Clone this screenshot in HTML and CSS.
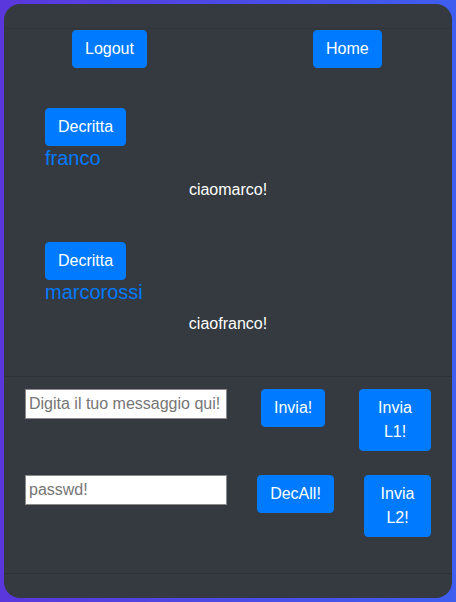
FILE: index.html
```html
<!DOCTYPE html>
<html lang="it">
<head>
<meta charset="utf-8">
<title>Chat</title>
<link rel="stylesheet" href="styles.css">
</head>
<body>
<div class="card">
  <div class="card-header"></div>
  <div class="card-body">
    <div class="nav-row">
      <button class="btn">Logout</button>
      <button class="btn btn-home">Home</button>
    </div>
    <div class="messages">
      <div class="msg">
        <button class="btn">Decritta</button>
        <div class="msg-name">franco</div>
        <p class="msg-text">ciaomarco!</p>
      </div>
      <div class="msg">
        <button class="btn">Decritta</button>
        <div class="msg-name">marcorossi</div>
        <p class="msg-text">ciaofranco!</p>
      </div>
    </div>
  </div>
  <div class="compose">
    <div class="compose-row">
      <input class="field" type="text" placeholder="Digita il tuo messaggio qui!">
      <button class="btn btn-send">Invia!</button>
      <button class="btn btn-l1">Invia L1!</button>
    </div>
    <div class="compose-row">
      <input class="field" type="text" placeholder="passwd!">
      <button class="btn btn-dec">DecAll!</button>
      <button class="btn btn-l2">Invia L2!</button>
    </div>
  </div>
  <div class="card-footer"></div>
</div>
</body>
</html>
```

FILE: styles.css
```css
html, body {
  margin: 0;
  height: 100%;
}
body {
  padding: 4px;
  box-sizing: border-box;
  background: linear-gradient(to right, #5a37dc, #3e5ef0);
  font-family: "Liberation Sans", Arial, sans-serif;
  font-size: 16px;
  line-height: 1.5;
}
.card {
  height: 100%;
  box-sizing: border-box;
  background: #343a40;
  border-radius: 16px;
  overflow: hidden;
  display: flex;
  flex-direction: column;
}
.card-header {
  height: 24px;
  flex: none;
  border-bottom: 1px solid rgba(0, 0, 0, 0.08);
}
.card-body {
  flex: none;
  height: 347px;
  box-sizing: border-box;
  padding-top: 1px;
}
.btn {
  font-family: "Liberation Sans", Arial, sans-serif;
  font-size: 16px;
  line-height: 24px;
  color: #fff;
  background: #007bff;
  border: 1px solid #007bff;
  border-radius: 4px;
  padding: 6px 12px;
  margin: 0;
  cursor: pointer;
}
.nav-row {
  display: flex;
  align-items: flex-start;
  padding-left: 68px;
}
.btn-home {
  margin-left: 166px;
}
.messages {
  margin-top: 40px;
}
.msg {
  padding-left: 41px;
  margin-bottom: 40px;
}
.msg-name {
  color: #007bff;
  font-size: 20px;
  line-height: 24px;
}
.msg-text {
  margin: 8px 0 0 -41px;
  text-align: center;
  color: #fff;
  line-height: 24px;
}
.compose {
  flex: 1;
  border-top: 1px solid rgba(0, 0, 0, 0.125);
  padding: 12px 0 0 21px;
  display: flex;
  flex-direction: column;
  gap: 24px;
}
.compose-row {
  display: flex;
  align-items: flex-start;
}
.field {
  width: 202px;
  height: 30px;
  box-sizing: border-box;
  border: 1px solid #8a8a8a;
  border-radius: 0;
  padding: 1px 3px;
  margin: 0;
  font-family: "Liberation Sans", Arial, sans-serif;
  font-size: 16px;
  background: #fff;
  color: #000;
}
.field::placeholder {
  color: #757575;
}
.btn-send {
  margin-left: 34px;
  width: 64px;
}
.btn-l1 {
  margin-left: 34px;
  width: 72px;
}
.btn-dec {
  margin-left: 30px;
  width: 77px;
}
.btn-l2 {
  margin-left: 30px;
  width: 67px;
}
.card-footer {
  height: 24px;
  flex: none;
  border-top: 1px solid rgba(0, 0, 0, 0.125);
}
```
